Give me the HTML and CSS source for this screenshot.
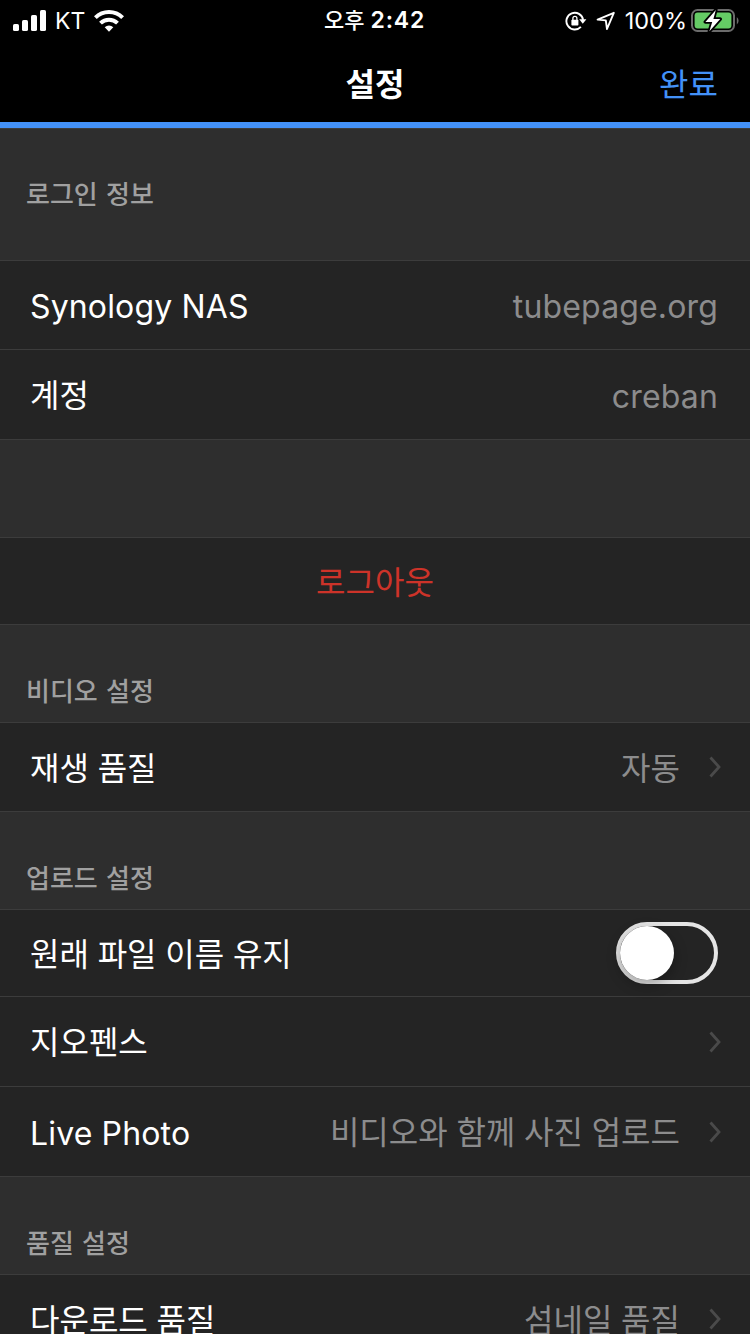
FILE: index.html
```html
<!DOCTYPE html>
<html lang="ko">
<head>
    <meta charset="UTF-8">
    <title>설정</title>
    <link rel="stylesheet" href="styles.css">
</head>
<body>
<div id="app">

    <div class="statusbar">
        <div class="status-left">
            <svg class="signal" width="34" height="22" viewBox="0 0 34 22" fill="#fff">
                <rect x="0" y="14" width="6" height="7" rx="1.6"/>
                <rect x="9" y="10" width="6" height="11" rx="1.6"/>
                <rect x="18" y="5" width="6" height="16" rx="1.6"/>
                <rect x="27" y="0" width="6" height="21" rx="1.6"/>
            </svg>
            <span class="carrier">KT</span>
            <svg class="wifi" width="30" height="22" viewBox="0 0 30 22" fill="none" stroke="#fff" stroke-width="4">
                <path d="M1.4 7.6a19.4 19.4 0 0 1 27.2 0"/>
                <path d="M6.5 13.1a12.2 12.2 0 0 1 17 0"/>
                <path d="M15 21.8l-4.3-4.6a6.2 6.2 0 0 1 8.6 0z" fill="#fff" stroke="none"/>
            </svg>
        </div>
        <div class="clock">오후 <span class="digits">2:42</span></div>
        <div class="status-right">
            <svg class="lock" width="22" height="20" viewBox="0 0 22 20">
                <path d="M15.9 15.9A8.4 8.4 0 1 1 18.1 8.8" fill="none" stroke="#fff" stroke-width="1.9"/>
                <path d="M14.2 8.2h7.2l-3.6 4.6z" fill="#fff"/>
                <rect x="6.4" y="8.8" width="7" height="5.8" rx=".8" fill="#fff"/>
                <path d="M7.9 9.2V7.3a2 2 0 0 1 4 0v1.9" fill="none" stroke="#fff" stroke-width="1.3"/>
            </svg>
            <svg class="arrow" width="20" height="20" viewBox="0 0 20 20">
                <path d="M1.6 8.6L17.8 1.8 11 18 9.8 9.4z" fill="none" stroke="#fff" stroke-width="1.9" stroke-linejoin="round"/>
            </svg>
            <span class="percent">100%</span>
            <svg class="battery" width="49" height="24" viewBox="0 0 49 24">
                <rect x="1" y="1" width="42" height="21" rx="5.5" fill="none" stroke="#6b6b6b" stroke-width="2"/>
                <path d="M45.8 8v7.4q1.8-1.6 1.8-3.7T45.8 8z" fill="#6b6b6b"/>
                <rect x="3.6" y="3.6" width="36.8" height="15.8" rx="3" fill="#65cb65"/>
                <path d="M24.8 1L14.4 13h6.8l-2.8 9.2L29.2 10h-6.8z" fill="#fff" stroke="#000" stroke-width="3.6" paint-order="stroke" stroke-linejoin="round"/>
            </svg>
        </div>
    </div>

    <div class="navbar">
        <span class="nav-title">설정</span>
        <span class="nav-done">완료</span>
    </div>

    <h2 class="section first">로그인 정보</h2>
    <div class="row">
        <span class="label latin">Synology NAS</span>
        <span class="value latin">tubepage.org</span>
    </div>
    <div class="row tall">
        <span class="label">계정</span>
        <span class="value latin">creban</span>
    </div>

    <div class="section"></div>
    <div class="row short logout"><span class="label">로그아웃</span></div>

    <h2 class="section">비디오 설정</h2>
    <div class="row">
        <span class="label">재생 품질</span>
        <span class="value">자동</span>
        <svg class="chevron" width="12" height="22" viewBox="0 0 12 22"><path d="M1.5 1.5L10 11 1.5 20.5"/></svg>
    </div>

    <h2 class="section">업로드 설정</h2>
    <div class="row short">
        <span class="label">원래 파일 이름 유지</span>
        <div class="switch"><div class="knob"></div></div>
    </div>
    <div class="row tall">
        <span class="label">지오펜스</span>
        <svg class="chevron" width="12" height="22" viewBox="0 0 12 22"><path d="M1.5 1.5L10 11 1.5 20.5"/></svg>
    </div>
    <div class="row tall">
        <span class="label latin">Live Photo</span>
        <span class="value">비디오와 함께 사진 업로드</span>
        <svg class="chevron" width="12" height="22" viewBox="0 0 12 22"><path d="M1.5 1.5L10 11 1.5 20.5"/></svg>
    </div>

    <h2 class="section">품질 설정</h2>
    <div class="row">
        <span class="label">다운로드 품질</span>
        <span class="value">섬네일 품질</span>
        <svg class="chevron" width="12" height="22" viewBox="0 0 12 22"><path d="M1.5 1.5L10 11 1.5 20.5"/></svg>
    </div>

</div>
</body>
</html>
```
FILE: styles.css
```css
* {
    box-sizing: border-box;
}

body {
    margin: 0;
    background-color: #2e2e2e;
    color: #fff;
    font-family: "Noto Sans CJK KR", sans-serif;
    font-size: 32px;
}

#app {
    width: 750px;
    height: 1334px;
    overflow: hidden;
}

svg {
    display: block;
    flex: none;
}

/* status bar */
.statusbar {
    display: grid;
    grid-template-columns: 1fr auto 1fr;
    align-items: center;
    height: 40px;
    padding: 0 10px 0 13px;
    background-color: #000;
    font-size: 22px;
    line-height: 40px;
}

.status-left,
.status-right {
    display: flex;
    align-items: center;
}

.status-right {
    justify-content: flex-end;
}

.carrier,
.percent,
.digits {
    font-family: Inter, sans-serif;
}

.carrier {
    margin: 0 9px 0 8px;
    font-size: 23px;
}

.clock {
    padding: 0 4px 3px 0;
    font-weight: 500;
    line-height: 36px;
}

.digits {
    font-size: 23px;
    font-weight: 600;
    letter-spacing: 0.8px;
}

.arrow {
    margin: 0 9px 0 9px;
}

.percent {
    margin-right: 4px;
    font-size: 23.5px;
}

/* title bar */
.navbar {
    display: grid;
    grid-template-columns: 1fr auto 1fr;
    height: 88px;
    padding: 0 32px;
    background-color: #000;
    border-bottom: 6px solid #4391f8;
    line-height: 84px;
}

.nav-title {
    grid-column: 2;
    font-weight: 600;
}

.nav-done {
    justify-self: end;
    color: #4391f8;
}

/* groups */
.section {
    display: flex;
    align-items: flex-end;
    height: 98px;
    margin: 0;
    padding: 0 26px 12px;
    border-top: 1px solid #3c3c3c;
    background-color: #2e2e2e;
    color: #a0a0a0;
    font-size: 26px;
    font-weight: 500;
    line-height: 40px;
    word-spacing: 1px;
}

.first {
    height: 132px;
    padding-bottom: 47px;
}

.row {
    display: flex;
    align-items: center;
    height: 89px;
    padding: 0 29px 0 30px;
    border-top: 1px solid #3c3c3c;
    background-color: #242424;
    line-height: 48px;
    word-spacing: -0.2px;
    white-space: nowrap;
}

.tall {
    height: 90px;
}

.short {
    height: 87px;
}

.label,
.value {
    padding-bottom: 3px;
}

.logout {
    justify-content: center;
    padding: 0 30px;
    color: #cd3329;
}

.value {
    margin-left: auto;
    color: #8c8c8d;
}

.latin {
    padding: 4px 0 0;
    font-family: Inter, sans-serif;
    letter-spacing: 0.15px;
    word-spacing: 0;
}

.value.latin {
    margin-right: 3px;
}

.chevron {
    margin-left: 29px;
    fill: none;
    stroke: #4a4a4a;
    stroke-width: 2.8;
}

.label + .chevron {
    margin-left: auto;
}

.switch {
    width: 102px;
    height: 62px;
    margin: 0 3px 0 auto;
    border: 4px solid #e5e5e5;
    border-radius: 31px;
}

.knob {
    width: 54px;
    height: 54px;
    border-radius: 50%;
    background-color: #fff;
    box-shadow: 0 5px 14px rgba(0, 0, 0, 0.3);
}
```
